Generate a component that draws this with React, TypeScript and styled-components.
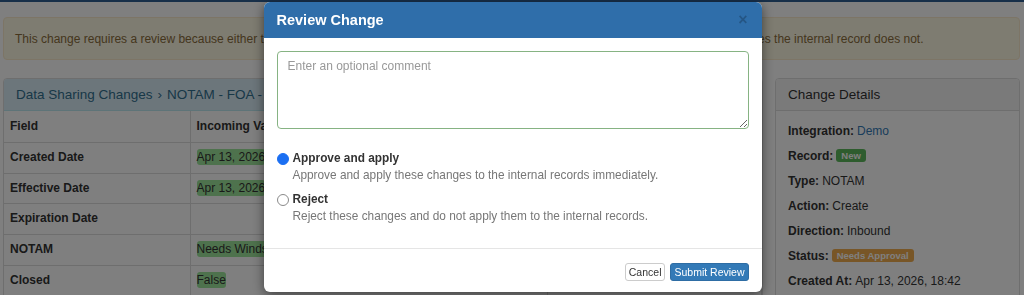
import React, { useState } from "react";
import styled, { createGlobalStyle } from "styled-components";

const GlobalStyle = createGlobalStyle`
  html, body {
    margin: 0;
    padding: 0;
    background: #ffffff;
    font-family: "Liberation Sans", Arial, Helvetica, sans-serif;
    color: #333333;
    font-size: 12px;
    overflow: hidden;
  }
  * {
    box-sizing: border-box;
  }
`;

const TopBar = styled.div`
  height: 2px;
  background: #2f5e93;
`;

const Container = styled.div`
  padding: 0 4px 0 3px;
`;

const Alert = styled.div`
  margin-top: 15px;
  height: 43px;
  display: flex;
  align-items: center;
  padding: 0 11px;
  background: #fcf8e3;
  border: 1px solid #faebcc;
  border-radius: 4px;
  color: #8a6d3b;
  white-space: nowrap;
  overflow: hidden;
`;

const Columns = styled.div`
  display: grid;
  grid-template-columns: 1fr 245px;
  gap: 12px;
  margin-top: 18px;
`;

const Panel = styled.div`
  border: 1px solid #ddd;
  border-radius: 4px;
  background: #fff;
  overflow: hidden;
`;

interface HeadingProps {
  $tone: "info" | "plain";
}

const PanelHeading = styled.div<HeadingProps>`
  height: 32px;
  display: flex;
  align-items: center;
  padding: 0 11px 0 12px;
  font-size: 13.5px;
  background: ${({ $tone }) => ($tone === "info" ? "#d9edf7" : "#f5f5f5")};
  color: ${({ $tone }) => ($tone === "info" ? "#31708f" : "#333")};
  border-bottom: 1px solid ${({ $tone }) => ($tone === "info" ? "#bce8f1" : "#ddd")};
  white-space: nowrap;
`;

const Crumb = styled.span`
  margin: 0 5px;
`;

const Table = styled.table`
  width: 100%;
  border-collapse: collapse;
`;

const Th = styled.th`
  text-align: left;
  padding: 8px 6px 7px;
  line-height: 15.75px;
  font-weight: bold;
  border-right: 1px solid #ddd;
  white-space: nowrap;
  &:first-child {
    width: 186px;
  }
`;

const Td = styled.td`
  padding: 7px 6px;
  line-height: 15.75px;
  border-top: 1px solid #ddd;
  border-right: 1px solid #ddd;
  white-space: nowrap;
`;

const FieldName = styled(Td)`
  font-weight: bold;
`;

const Added = styled.span`
  background: #9de49a;
  border-radius: 3px;
  padding: 1px 0;
`;

const DetailsBody = styled.div`
  padding: 12px 12px 0;
`;

const DetailLine = styled.div`
  line-height: 17px;
  margin-bottom: 8px;
  white-space: nowrap;
`;

const Key = styled.b`
  margin-right: 3px;
`;

const Link = styled.a`
  color: #337ab7;
  text-decoration: none;
`;

interface BadgeProps {
  $color: string;
}

const Badge = styled.span<BadgeProps>`
  display: inline-block;
  background: ${({ $color }) => $color};
  color: #fff;
  font-size: 9.5px;
  font-weight: bold;
  line-height: 13px;
  padding: 0 5px;
  border-radius: 3px;
  vertical-align: 1px;
`;

const Overlay = styled.div`
  position: fixed;
  inset: 0;
  background: rgba(0, 0, 0, 0.5);
  display: flex;
  justify-content: center;
  align-items: flex-start;
  padding-top: 2px;
`;

const Modal = styled.div`
  width: 498px;
  background: #fff;
  border-radius: 6px;
  overflow: hidden;
  box-shadow: 0 3px 12px rgba(0, 0, 0, 0.5);
  margin-left: 1px;
`;

const ModalHeader = styled.div`
  height: 36px;
  background: #2f6eaa;
  display: flex;
  align-items: center;
  justify-content: space-between;
  padding: 0 14px 0 13px;
`;

const ModalTitle = styled.h4`
  margin: 0;
  color: #fff;
  font-size: 14.5px;
  font-weight: bold;
`;

const Close = styled.button`
  background: none;
  border: none;
  padding: 0;
  color: rgba(0, 0, 0, 0.22);
  font-size: 16px;
  font-weight: bold;
  line-height: 1;
  font-family: inherit;
  cursor: pointer;
`;

const ModalBody = styled.div`
  padding: 13px 13px 23px;
`;

const Comment = styled.textarea`
  display: block;
  width: 100%;
  height: 78px;
  border: 1px solid #86b383;
  border-radius: 4px;
  padding: 7px 10px;
  font-family: inherit;
  font-size: 12px;
  color: #333;
  resize: vertical;
  outline: none;
  &::placeholder {
    color: #999;
  }
`;

const Options = styled.div`
  margin-top: 21px;
  display: flex;
  flex-direction: column;
  gap: 7px;
`;

const Option = styled.label`
  display: grid;
  grid-template-columns: 16px 1fr;
  line-height: 17px;
  font-size: 11.85px;
  cursor: pointer;
`;

const Radio = styled.input`
  appearance: none;
  margin: 3px 0 0 0;
  width: 12px;
  height: 12px;
  border-radius: 50%;
  border: 1px solid #8a8a8a;
  background: #fff;
  &:checked {
    border-color: #1b6ff2;
    background: #1b6ff2;
  }
`;

const OptionTitle = styled.span`
  font-weight: bold;
  color: #333;
`;

const OptionHelp = styled.span`
  grid-column: 2;
  color: #777;
`;

const ModalFooter = styled.div`
  border-top: 1px solid #e5e5e5;
  padding: 14px 13px 11px;
  display: flex;
  justify-content: flex-end;
  gap: 5px;
`;

interface ButtonProps {
  $primary?: boolean;
}

const Button = styled.button<ButtonProps>`
  height: 18px;
  padding: 0 3px;
  font-family: inherit;
  font-size: 10.5px;
  border-radius: 3px;
  border: 1px solid ${({ $primary }) => ($primary ? "#2e6da4" : "#ccc")};
  background: ${({ $primary }) => ($primary ? "#337ab7" : "#fff")};
  color: ${({ $primary }) => ($primary ? "#fff" : "#333")};
  cursor: pointer;
`;

const rows: [string, string][] = [
  ["Created Date", "Apr 13, 2026"],
  ["Effective Date", "Apr 13, 2026"],
  ["Expiration Date", ""],
  ["NOTAM", "Needs Windsock replaced"],
  ["Closed", "False"],
];

const App = () => {
  const [choice, setChoice] = useState("approve");

  return (
    <>
      <GlobalStyle />
      <TopBar />
      <Container>
        <Alert>
          This change requires a review because either the incoming record conflicts with the latest
          internal data, or the incoming record contains values the internal record does not.
        </Alert>
        <Columns>
          <Panel>
            <PanelHeading $tone="info">
              Data Sharing Changes<Crumb>›</Crumb>NOTAM - FOA - Needs Windsock replaced
            </PanelHeading>
            <Table>
              <thead>
                <tr>
                  <Th>Field</Th>
                  <Th>Incoming Value</Th>
                  <Th>Internal Value</Th>
                </tr>
              </thead>
              <tbody>
                {rows.map(([name, value]) => (
                  <tr key={name}>
                    <FieldName>{name}</FieldName>
                    <Td>{value && <Added>{value}</Added>}</Td>
                    <Td />
                  </tr>
                ))}
              </tbody>
            </Table>
          </Panel>
          <Panel>
            <PanelHeading $tone="plain">Change Details</PanelHeading>
            <DetailsBody>
              <DetailLine>
                <Key>Integration:</Key>
                <Link href="#">Demo</Link>
              </DetailLine>
              <DetailLine>
                <Key>Record:</Key>
                <Badge $color="#5cb85c">New</Badge>
              </DetailLine>
              <DetailLine>
                <Key>Type:</Key>NOTAM
              </DetailLine>
              <DetailLine>
                <Key>Action:</Key>Create
              </DetailLine>
              <DetailLine>
                <Key>Direction:</Key>Inbound
              </DetailLine>
              <DetailLine>
                <Key>Status:</Key>
                <Badge $color="#f0ad4e">Needs Approval</Badge>
              </DetailLine>
              <DetailLine>
                <Key>Created At:</Key>Apr 13, 2026, 18:42
              </DetailLine>
            </DetailsBody>
          </Panel>
        </Columns>
      </Container>

      <Overlay>
        <Modal>
          <ModalHeader>
            <ModalTitle>Review Change</ModalTitle>
            <Close aria-label="Close">×</Close>
          </ModalHeader>
          <ModalBody>
            <Comment placeholder="Enter an optional comment" />
            <Options>
              <Option>
                <Radio
                  type="radio"
                  name="decision"
                  checked={choice === "approve"}
                  onChange={() => setChoice("approve")}
                />
                <OptionTitle>Approve and apply</OptionTitle>
                <OptionHelp>Approve and apply these changes to the internal records immediately.</OptionHelp>
              </Option>
              <Option>
                <Radio
                  type="radio"
                  name="decision"
                  checked={choice === "reject"}
                  onChange={() => setChoice("reject")}
                />
                <OptionTitle>Reject</OptionTitle>
                <OptionHelp>Reject these changes and do not apply them to the internal records.</OptionHelp>
              </Option>
            </Options>
          </ModalBody>
          <ModalFooter>
            <Button>Cancel</Button>
            <Button $primary>Submit Review</Button>
          </ModalFooter>
        </Modal>
      </Overlay>
    </>
  );
};

export default App;
